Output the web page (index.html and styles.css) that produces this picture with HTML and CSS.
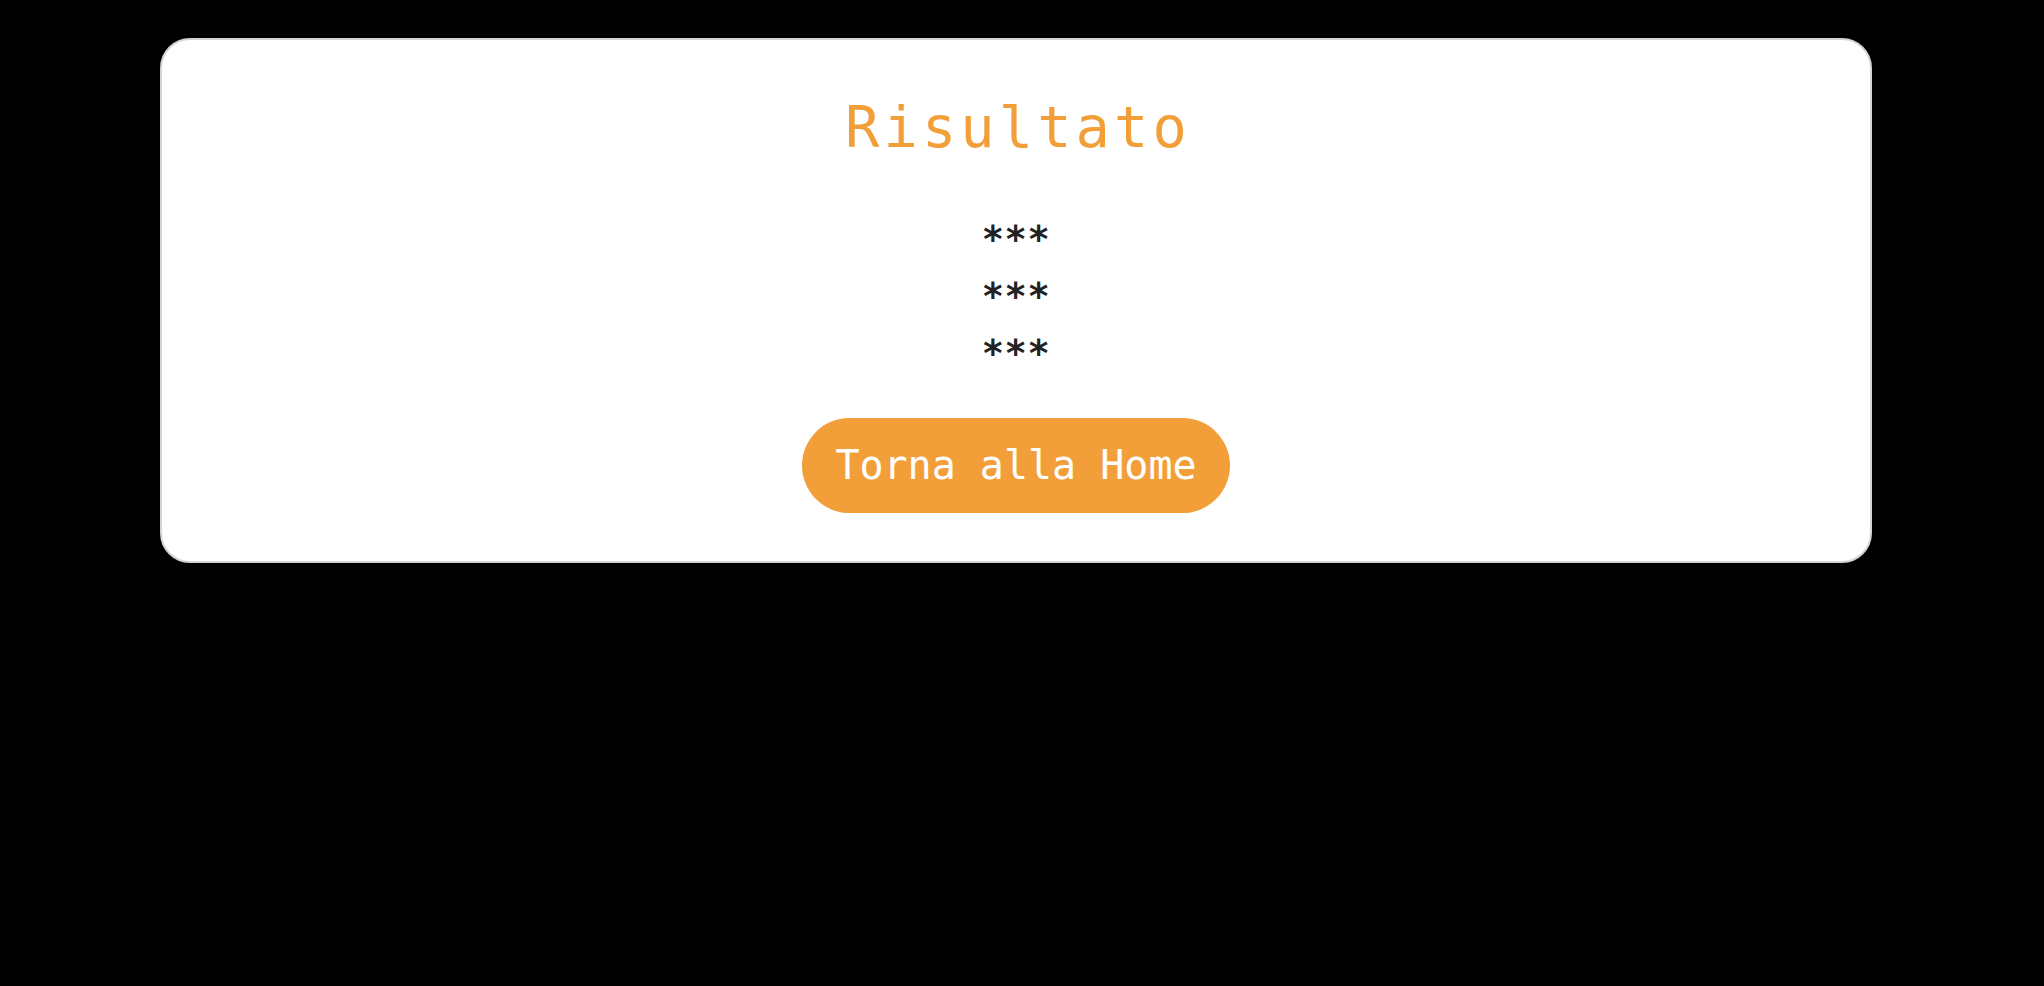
FILE: index.html
```html
<!DOCTYPE html>
<html lang="it">
<head>
<meta charset="utf-8">
<title>Risultato</title>
<link rel="stylesheet" href="styles.css">
</head>
<body>
<main class="card">
  <h1 class="title">Risultato</h1>
  <div class="result">
    <div class="row">***</div>
    <div class="row">***</div>
    <div class="row">***</div>
  </div>
  <a class="btn" href="#">Torna alla Home</a>
</main>
</body>
</html>
```
FILE: styles.css
```css
html, body {
  margin: 0;
  padding: 0;
  background: #000;
}
body {
  font-family: "DejaVu Sans Mono", monospace;
  padding-top: 38px;
}
.card {
  box-sizing: border-box;
  width: 1712px;
  margin-left: 160px;
  background: #fff;
  border: 2px solid #d4d4d4;
  border-radius: 30px;
  padding: 54px 0 48px;
  display: flex;
  flex-direction: column;
  align-items: center;
}
.title {
  margin: 0;
  padding-left: 4px;
  font-size: 57px;
  line-height: 66px;
  font-weight: normal;
  letter-spacing: 4.1px;
  color: #f29f3a;
}
.result {
  margin-top: 51px;
  display: flex;
  flex-direction: column;
  align-items: center;
}
.row {
  font-size: 37px;
  font-weight: bold;
  letter-spacing: 0.5px;
  line-height: 57px;
  color: #222;
}
.btn {
  margin-top: 36px;
  box-sizing: border-box;
  height: 95px;
  width: 428px;
  border-radius: 48px;
  background: #f29f3a;
  color: #fff;
  font-size: 40px;
  line-height: 95px;
  text-align: center;
  text-decoration: none;
}
```
